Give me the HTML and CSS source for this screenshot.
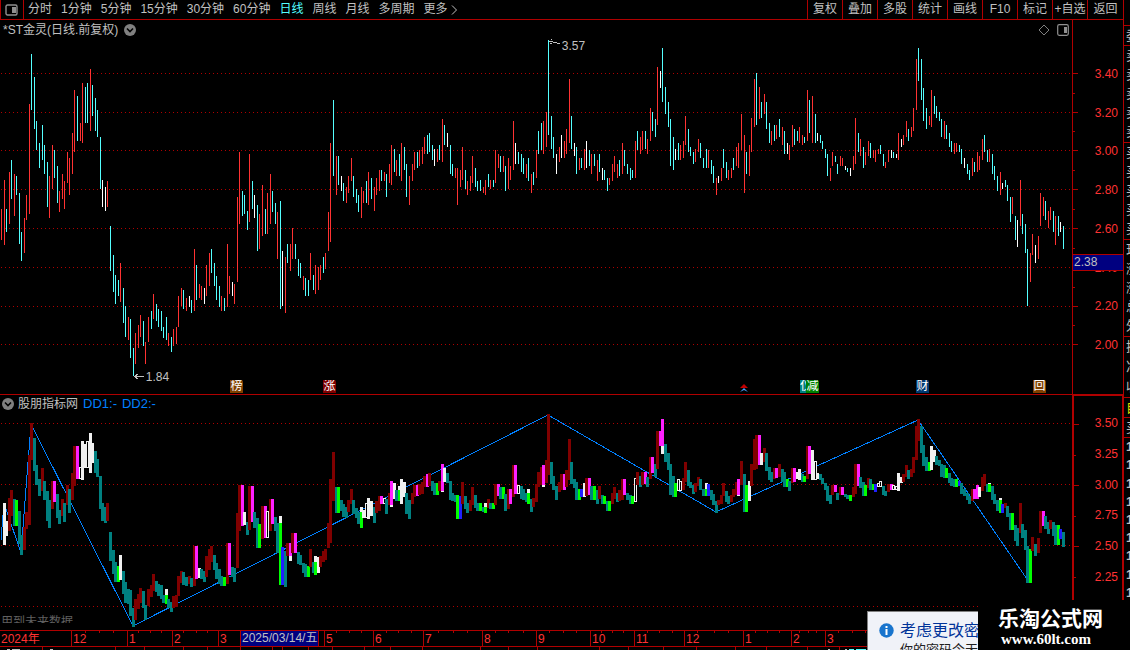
FILE: index.html
```html
<!DOCTYPE html>
<html lang="zh-CN">
<head>
<meta charset="utf-8">
<title>*ST金灵 日线</title>
<link rel="stylesheet" href="styles.css">
</head>
<body>
<div class="app">
  <main class="desk">
    <nav class="toolbar">
      <button class="layout-btn" aria-label="布局"><svg width="14" height="13" viewBox="0 0 14 13"><rect x="1" y="1" width="11" height="10" rx="1.5" fill="none" stroke="#909090" stroke-width="1.4"/><rect x="7" y="3" width="4" height="6" fill="#909090"/></svg></button>
      <div class="periods">
        <button>分时</button><button>1分钟</button><button>5分钟</button><button>15分钟</button><button>30分钟</button><button>60分钟</button><button class="active">日线</button><button>周线</button><button>月线</button><button>多周期</button><button class="more">更多<svg width="7" height="10" viewBox="0 0 7 10"><path d="M1 0.5L5.5 5L1 9.5" fill="none" stroke="#c0c0c0"/></svg></button>
      </div>
      <div class="tools">
        <button>复权</button><button>叠加</button><button>多股</button><button>统计</button><button>画线</button><button>F10</button><button>标记</button><button>+自选</button><button>返回</button>
      </div>
    </nav>

    <section class="pane price">
      <div class="plot">
        <svg class="canvas" id="price" viewBox="0 20 1072 374" preserveAspectRatio="none"></svg>
        <header class="pane-head">
          <h1>*ST金灵(日线.前复权)</h1>
          <button class="fold" aria-label="展开"><svg width="12" height="12" viewBox="0 0 12 12"><circle cx="6" cy="6" r="6" fill="#808080"/><path d="M3 4.5L6 7.5L9 4.5" fill="none" stroke="#000" stroke-width="1.6"/></svg></button>
          <span class="head-icons">
            <svg width="12" height="12" viewBox="0 0 12 12"><path d="M6 1L11 6L6 11L1 6Z" fill="none" stroke="#808080"/></svg>
            <svg width="12" height="12" viewBox="0 0 12 12"><rect x="0.7" y="0.7" width="10.6" height="10.6" rx="1.5" fill="none" stroke="#909090" stroke-width="1.2"/><rect x="7" y="3" width="3" height="6" fill="#909090"/></svg>
          </span>
        </header>
        <span class="pin high">3.57</span>
        <span class="pin low">1.84</span>
        <span class="badge brown b1">榜</span>
        <span class="badge maroon b2">涨</span>
        <svg class="marker" width="8" height="8" viewBox="0 0 8 8"><path d="M4 0L8 4H0Z" fill="#c00000"/><path d="M0 8L4 4L8 8L4 6Z" fill="#40a0ff"/></svg>
        <span class="badge teal b3">仅</span>
        <span class="badge green b4">减</span>
        <span class="badge navy b5">财</span>
        <span class="badge brown b6">回</span>
      </div>
      <div class="scale">
        <svg class="ticks" width="7" height="374" viewBox="0 20 7 374"><path d="M0 73.5H5M0 112.5H5M0 150.5H5M0 189.5H5M0 228.5H5M0 267.5H5M0 306.5H5M0 344.5H5M0 93.5H2M0 131.5H2M0 170.5H2M0 209.5H2M0 248.5H2M0 287.5H2M0 325.5H2" stroke="#b00000"/></svg>
        <span>3.40</span><span>3.20</span><span>3.00</span><span>2.80</span><span>2.60</span><span>2.40</span><span>2.20</span><span>2.00</span>
        <b class="cursor-price">2.38</b>
      </div>
    </section>

    <section class="pane study">
      <div class="plot">
        <svg class="canvas" id="study" viewBox="0 395 1072 235" preserveAspectRatio="none"></svg>
        <header class="pane-head">
          <button class="fold" aria-label="展开"><svg width="12" height="12" viewBox="0 0 12 12"><circle cx="6" cy="6" r="6" fill="#808080"/><path d="M3 4.5L6 7.5L9 4.5" fill="none" stroke="#000" stroke-width="1.6"/></svg></button>
          <h2>股朋指标网</h2><span class="value">DD1:-</span><span class="value">DD2:-</span>
        </header>
        <p class="hint">用到未来数据</p>
      </div>
      <div class="scale framed">
        <svg class="ticks" width="7" height="235" viewBox="0 395 7 235"><path d="M0 423.5H5M0 484.5H5M0 545.5H5M0 454.5H2M0 515.5H2M0 576.5H2" stroke="#b00000"/></svg>
        <span>3.50</span><span>3.25</span><span>3.00</span><span>2.75</span><span>2.50</span><span>2.25</span>
      </div>
    </section>

    <div class="timeline">
      <svg class="minor" id="minor" viewBox="0 0 1123 3" preserveAspectRatio="none"></svg>
      <span>2024年</span><span>12</span><span>1</span><span>2</span><span>3</span><span class="picked"><b>2025/03/14/五</b></span><span>5</span><span>6</span><span>7</span><span>8</span><span>9</span><span>10</span><span>11</span><span>12</span><span>1</span><span>2</span><span>3</span>
    </div>
    <footer class="tabs"><svg class="tabmarks" viewBox="0 647 1123 3" preserveAspectRatio="none"><path d="M42.5 647v3M115.5 647v3M144.5 647v3M183.5 647v3M207.5 647v3M240.5 647v3M272.5 647v3M282.5 647v3M308.5 647v3M332.5 647v3M364.5 647v3M390.5 647v3M422.5 647v3M480.5 647v3M508.5 647v3M537.5 647v3M599.5 647v3M628.5 647v3M663.5 647v3M696.5 647v3M735.5 647v3M766.5 647v3M807.5 647v3M839.5 647v3" stroke="#b00000"/><path d="M7 649.5h3M12 649.5h8M50 649.5h3M828 649.5h2M845 649.5h2" stroke="#c0c0c0"/><path d="M849 649.5h5M856 649.5h10" stroke="#54ffff"/></svg></footer>
  </main>

  <aside class="quote">
    <div class="rows r0"></div>
    <div class="rows r1"><span>委</span></div>
    <div class="rows r5"><span>卖</span><span>卖</span><span>卖</span><span>卖</span><span>卖</span></div>
    <div class="rows r5"><span>买</span><span>买</span><span>买</span><span>买</span><span>买</span></div>
    <div class="rows r5"><span>现</span><span>涨</span><span>涨</span><span>总</span><span>外</span></div>
    <div class="rows r3"><span>换</span><span>净</span><span>收</span></div>
    <div class="rows r1 yellow"><span>自</span></div>
    <div class="rows r1"><span>买</span></div>
    <div class="rows deals"><span>1</span><span>1</span><span>1</span><span>1</span><span>1</span><span>1</span><span>1</span><span>1</span><span>1</span></div>
  </aside>

  <div class="corner">
    <div class="toast" role="status">
      <svg width="15" height="15" viewBox="0 0 15 15"><circle cx="7.500" cy="7.500" r="7.200" fill="#1874cd"/><rect x="6.500" y="6" width="2" height="6" fill="#fff"/><rect x="6.500" y="3" width="2" height="2" fill="#fff"/></svg>
      <div><strong>考虑更改密码</strong><p>你的密码今天过期</p></div>
    </div>
    <div class="brand"><strong>乐淘公式网</strong><span>www.60lt.com</span></div>
  </div>
</div>
<script src="chart.js"></script>
</body>
</html>
```
FILE: styles.css
```css
* { box-sizing: border-box; margin: 0; padding: 0; }
body {
  background: #000;
  color: #c0c0c0;
  font: 12px/16px "Liberation Sans", "Noto Sans CJK SC", sans-serif;
  overflow: hidden;
}
button { background: none; border: 0; color: inherit; font: inherit; white-space: nowrap; }
svg { display: block; }
.app { display: flex; min-height: 100vh; position: relative; overflow: hidden; }
.desk { flex: 1; min-width: 0; display: flex; flex-direction: column; }

.toolbar { display: flex; height: 20px; border-bottom: 1px solid #b00000; }
.layout-btn { width: 24px; padding: 2px 0 0 4px; border-left: 1px solid #b00000; border-right: 1px solid #b00000; }
.periods { flex: 1; display: flex; gap: 9px; padding-left: 4px; }
.periods button { line-height: 19px; }
.periods .active { color: #54ffff; }
.periods .more { display: flex; align-items: center; gap: 3px; }
.tools { display: grid; grid-template-columns: repeat(8, 35px) 36px; }
.tools button { border-left: 1px solid #b00000; line-height: 19px; text-align: center; }

.pane { display: flex; }
.price { height: 375px; border-bottom: 1px solid #b00000; }
.study { height: 235px; }
.plot { flex: 1; min-width: 0; position: relative; }
.canvas { position: absolute; inset: 0; width: 100%; height: 100%; shape-rendering: crispEdges; }
.pane-head { position: relative; display: flex; align-items: center; gap: 6px; height: 19px; padding-left: 3px; }
.pane-head h1, .pane-head h2 { font-size: 12px; font-weight: normal; }
.head-icons { margin-left: auto; display: flex; gap: 7px; padding-right: 3px; }
.study .pane-head { padding-left: 2px; gap: 4px; height: 17px; }
.value { padding-left: 1px; color: #0080ff; font-size: 13px; }
.hint { position: absolute; left: 1px; top: 220px; height: 8px; line-height: 14px; overflow: hidden; color: #606060; }

.pin { position: absolute; }
.high { left: 52.400%; top: 18px; }
.low { left: 13.600%; top: 349px; }
.badge { position: absolute; top: 360px; width: 13px; height: 13px; line-height: 13px; font-size: 12px; color: #fff; text-align: center; border-top-right-radius: 2px; overflow: hidden; }
.brown { background: #804000; }
.maroon { background: #800000; }
.teal { background: #008080; }
.green { background: #008000; }
.navy { background: #003870; }
.b1 { left: 21.460%; }
.b2 { left: 30.140%; }
.b3 { left: 74.630%; width: 6px; text-align: left; }
.b4 { left: 75.190%; }
.b5 { left: 85.450%; }
.b6 { left: 96.370%; }
.marker { position: absolute; left: 69%; top: 364px; }

.scale { width: 51px; position: relative; border-left: 1px solid #b00000; display: flex; flex-direction: column; justify-content: space-between; padding: 46px 5px 41px 0; color: #ff3232; text-align: right; }
.ticks { position: absolute; left: 0; top: 0; shape-rendering: crispEdges; }
.cursor-price { position: absolute; left: 0; right: 0; top: 234px; height: 17px; line-height: 15px; padding-left: 1px; background: #000080; border: solid #b00000; border-width: 1px 0; color: #c0c0c0; font-weight: normal; font-size: 12px; text-align: left; }
.framed { border: 2px solid #b00000; border-width: 1px 1px 0 2px; padding: 19px 4px 45px 0; }

.timeline { position: relative; display: grid; height: 17px; padding-right: 51px; border: solid #b00000; border-width: 1px 0; line-height: 16px; color: #ff3232;
  grid-template-columns: 71fr 56fr 45fr 46fr 22fr 84fr 49fr 50fr 59fr 54fr 54fr 44fr 50fr 59fr 48fr 34fr 247fr; }
.timeline span { min-width: 0; height: 15px; padding-left: 1px; border-left: 1px solid #b00000; white-space: nowrap; }
.timeline span:first-of-type { border-left: 0; }
.timeline .picked { padding: 0; }
.picked b { display: inline-block; height: 15px; line-height: 15px; padding: 0 1px; background: #000080; color: #c0c0c0; font-weight: normal; border-right: 1px solid #b00000; vertical-align: top; }
.minor { position: absolute; left: 0; top: 0; width: 100%; height: 3px; shape-rendering: crispEdges; }
.tabs { height: 3px; }
.tabmarks { width: 100%; height: 3px; shape-rendering: crispEdges; }

.quote { width: 7px; overflow: hidden; border-left: 1px solid #b00000; display: flex; flex-direction: column; }
.rows { display: flex; flex-direction: column; justify-content: space-around; padding-left: 2px; border-bottom: 1px solid #b00000; line-height: 16px; font-size: 13px; }
.r0 { height: 26px; }
.r1 { height: 20px; }
.r5 { height: 97px; }
.r3 { height: 61px; }
.yellow { color: #e0e000; }
.deals { border: 0; height: 164px; font-weight: bold; }

.corner { position: absolute; right: 0; bottom: 0; height: 50px; display: flex; align-items: flex-end; }
.toast { width: 111px; height: 39px; overflow: hidden; display: flex; gap: 6px; padding: 11px 0 0 11px; background: #f0f2f8; border: solid #808080; border-width: 1px 0 0 1px; white-space: nowrap; }
.toast svg { flex: none; }
.toast div { margin-top: -3px; }
.toast strong { display: block; font-size: 16px; line-height: 22px; font-weight: normal; color: #003399; }
.toast p { font-size: 13px; line-height: 16px; color: #202020; }
.brand { width: 152px; height: 50px; padding: 8px 0 0 20px; background: #000; color: #fff; }
.brand strong { display: block; font-size: 21px; line-height: 22px; }
.brand span { display: block; padding-left: 3px; font: bold 15px/18px "Liberation Serif", serif; }
```
FILE: chart.js
```js
// x, high, low, price colour (r up, c down, w flat), study colour
const bars = `1 209 240 r -,4 180 245 r W,6 209 232 c W,9 172 224 r R,11 160 199 c R,14 174 216 r T,16 176 195 c G,19 193 244 c T,21 232 261 c T,24 218 253 r R,26 195 220 r R,29 104 214 r R,31 54 110 c R,34 77 129 c T,36 121 150 c T,39 143 168 c T,42 125 160 c R,44 145 174 c T,47 162 207 c T,49 176 218 r T,52 145 189 r R,54 150 178 c M,57 166 203 c T,59 191 212 r T,62 174 199 r R,64 181 209 r T,67 152 183 r R,69 158 195 r T,72 133 174 r R,74 90 152 r R,77 96 141 c M,80 123 141 r O,82 83 143 r W,85 87 123 c W,87 83 123 c O,90 69 131 r W,92 85 116 c W,95 98 131 c T,97 110 137 c T,100 137 189 c T,102 180 207 w T,105 187 211 w T,107 181 207 r R,110 226 271 c T,113 255 292 c T,115 275 304 c T,118 280 296 c G,120 263 302 r W,123 288 323 c T,125 306 337 c T,128 317 340 r T,130 319 358 c T,133 348 376 c T,135 333 364 r R,138 325 348 r R,140 315 337 r R,143 321 346 c T,145 342 364 r T,148 317 342 r R,151 311 329 c R,153 294 319 r R,156 304 321 c T,158 309 327 c T,161 311 331 c T,163 327 338 c T,166 317 340 c G,168 333 346 r T,171 337 352 c T,173 329 346 r R,176 327 344 r R,178 296 327 r R,181 288 306 r R,183 290 309 c T,186 298 311 r T,189 296 307 w R,191 300 313 c T,194 249 311 r R,196 265 300 c M,199 284 298 r W,201 286 300 r T,204 288 304 w T,206 265 296 r R,209 253 286 r R,211 249 273 c R,214 263 286 c T,216 276 300 c T,219 286 307 c T,221 296 311 r T,224 298 311 c G,227 244 307 r R,229 276 294 r M,232 282 296 w T,234 284 304 r T,237 197 282 r R,239 152 224 r R,242 191 216 c M,244 195 214 c W,247 211 230 c T,249 154 222 r R,252 181 209 c M,254 195 218 w T,257 205 251 c T,259 214 249 r G,262 185 236 r R,265 209 234 c M,267 193 234 r O,270 174 224 r R,272 191 212 c M,275 203 224 c T,277 212 259 r T,280 201 309 c G,282 251 306 w B,285 257 313 r T,287 244 263 c R,290 244 271 r M,292 228 259 r R,295 244 259 c M,298 259 276 c T,300 263 278 c T,303 276 290 r T,305 278 296 c T,308 280 296 c G,310 253 280 r R,313 275 290 c T,315 265 294 r G,318 267 290 r W,320 265 280 r R,323 257 273 c R,325 253 269 r R,328 212 251 r R,330 143 242 r R,333 100 176 c R,336 156 195 r T,338 156 185 c G,341 176 191 w T,343 183 201 c T,346 187 203 r T,348 176 193 r R,351 158 181 r R,353 176 197 c T,356 189 203 c T,358 195 212 c T,361 187 218 r G,363 191 203 r W,366 181 203 c O,368 172 205 r W,371 178 199 c W,374 187 211 r T,376 178 195 r R,379 170 191 r R,381 170 181 c M,384 172 181 r O,386 174 197 c T,389 164 183 r R,391 145 185 r M,394 149 172 c W,396 160 176 r T,399 154 176 c G,401 143 181 r W,404 147 170 c W,406 164 197 c T,409 176 205 r T,412 164 181 r R,414 152 170 r R,417 152 168 c M,419 150 166 r R,422 147 164 r R,424 137 154 r R,427 135 154 c M,429 133 152 c R,432 145 160 c T,434 149 166 w T,437 149 162 r G,439 145 160 c R,442 119 162 r M,444 125 145 c W,447 133 147 w T,450 145 174 c T,452 164 176 c T,455 168 178 r T,457 168 205 r G,460 170 187 r B,462 147 180 r R,465 170 189 c T,467 181 195 r T,470 176 191 r R,472 156 183 r R,475 168 187 c T,477 181 191 c T,480 180 191 c G,483 187 193 r T,485 180 195 r G,488 174 187 c R,490 180 189 r T,493 180 187 c G,495 150 183 r R,498 154 168 r M,500 156 172 c T,503 156 172 r G,505 166 191 c T,508 158 189 r R,510 166 180 r M,513 121 170 r R,515 143 164 w M,518 152 164 c O,521 154 172 c T,523 158 174 c T,526 164 178 r T,528 158 181 c G,531 174 193 r T,533 172 185 c R,536 150 178 r R,538 131 154 c R,541 123 150 c R,543 121 154 r M,546 112 147 r R,548 40 135 c R,551 116 149 c T,553 137 158 c T,556 154 174 w T,559 147 162 r R,561 135 158 w R,564 141 158 r M,566 129 154 r R,569 79 143 r R,571 116 149 c T,574 143 156 w T,576 147 174 c T,579 158 170 r G,581 158 168 c B,584 149 170 r W,586 141 168 w R,589 150 166 c M,591 154 174 r T,594 154 166 c G,597 160 181 r T,599 154 172 c R,602 168 180 w T,604 170 180 c G,607 178 191 c T,609 178 185 r G,612 164 181 r R,614 156 172 r R,617 164 178 r T,619 160 176 c R,622 143 174 r R,624 150 166 c M,627 164 174 c T,630 168 180 c T,632 170 178 c G,635 141 178 r O,637 131 150 c R,640 137 154 r T,642 131 150 r R,645 131 149 c M,647 139 154 r T,650 108 141 r R,652 112 131 c M,655 119 137 c T,657 67 125 r R,660 71 88 w M,662 48 102 c M,665 87 114 c T,668 102 127 c T,670 119 166 c T,673 137 170 c T,675 149 160 w G,678 143 160 c O,680 145 160 r O,683 141 158 r R,685 116 145 r R,688 129 152 c T,690 147 156 c T,693 152 164 c T,695 149 162 r R,698 139 152 r R,700 143 158 c T,703 158 168 c T,706 149 168 c G,708 150 168 r B,711 160 174 c T,713 166 183 c T,716 178 195 r T,718 176 183 w R,721 168 181 r R,723 149 168 c R,726 162 178 c T,728 170 180 r T,731 168 178 r R,733 158 170 c R,736 147 166 r R,738 143 168 r M,741 114 150 r R,744 135 193 r T,746 152 174 c G,749 145 176 r W,751 118 152 r R,754 79 127 r R,756 73 125 c R,759 87 119 r M,761 102 118 c W,764 94 114 r R,766 102 129 c T,769 123 143 c T,771 131 145 r T,774 125 141 c R,776 125 139 r M,779 119 137 c R,782 127 145 r T,784 131 154 c T,787 143 154 w G,789 145 160 r T,792 125 147 r R,794 129 145 c M,797 131 141 c W,799 127 143 r W,802 135 145 r T,804 137 143 c G,807 90 141 r R,809 100 133 c M,812 96 143 r W,815 114 143 c O,817 133 141 w W,820 135 143 c T,822 141 149 c T,825 149 158 c T,827 154 176 c T,830 168 181 r T,832 152 166 r R,835 156 162 c M,837 164 174 c T,840 156 166 r R,842 158 166 r M,845 166 170 w T,847 168 172 c T,850 168 176 w G,853 156 170 r R,855 118 164 r R,858 133 152 c M,860 139 156 r T,863 147 168 c T,865 152 165 r G,868 141 156 r R,870 143 158 c T,873 150 158 r G,875 150 162 r B,878 149 154 r O,880 145 154 c O,883 154 166 c T,885 162 168 r T,888 150 162 r R,891 150 158 w M,893 152 158 c O,896 154 158 w O,898 133 160 r W,901 139 147 w W,903 135 145 r R,906 121 137 r R,908 129 141 c T,911 127 137 r R,913 108 131 r R,916 59 110 r R,918 48 81 c R,921 59 100 c T,923 88 121 c T,926 108 129 c T,929 116 125 r G,931 90 127 r W,934 96 114 c W,936 106 118 c T,939 112 121 c T,941 119 137 c T,944 121 139 r T,946 125 139 c G,949 133 147 c T,951 141 152 c T,954 143 154 r T,956 143 152 r G,959 145 152 c B,961 149 164 c T,964 158 168 w T,967 164 174 c T,969 170 180 c T,972 158 176 r R,974 162 172 c M,977 152 172 r M,979 156 170 r W,982 139 160 r R,984 135 152 c R,987 150 162 c T,989 149 162 r G,992 154 174 c T,994 166 180 c T,997 176 191 c T,1000 172 195 r G,1002 183 189 w B,1005 180 187 c R,1007 185 201 c T,1010 197 222 c T,1012 197 214 r G,1015 216 240 c T,1017 220 247 w T,1020 180 226 r R,1022 214 234 c T,1025 224 253 c T,1027 249 306 c T,1030 253 282 r G,1032 234 255 r R,1035 245 263 w T,1038 236 259 r R,1040 193 226 r R,1043 197 216 r M,1045 201 220 c T,1048 211 228 r T,1050 207 220 r R,1053 211 232 c T,1055 216 245 r T,1058 216 236 c G,1060 222 232 w B,1063 226 249 c T`
  .split(",").map(row => row.split(" "));

const priceInk = { r: "#ff3232", c: "#54ffff", w: "#ffffff" };
const studyInk = { R: "#800000", T: "#008080", M: "#ff20ff", G: "#00ff00", B: "#2020ff", W: "#f0f0f0" };
const rect = (x, top, bottom, width, fill) =>
  `<rect x="${x}" y="${top}" width="${width}" height="${Math.max(1, bottom - top)}" fill="${fill}"/>`;
const dots = ys => ys.map(y => `<path d="M1 ${y}.5H1072" stroke="#b00000" stroke-dasharray="1 3"/>`).join("");

let price = dots([73, 112, 150, 189, 228, 267, 306, 344]);
let study = dots([423, 484, 545, 606]);
study += `<path d="M1 540L4 503L21 553L31 424L133 626L548 415L716 512L918 420L1029 582" fill="none" stroke="#0080ff"/>`;

// The study pane plots the same highs and lows on its own scale.
const toStudy = y => Math.round(389.2 + 0.63 * y);
let prev = null;
for (const [xs, hs, ls, ink, mark] of bars) {
  const x = +xs;
  price += rect(x, +hs, +ls, 1, priceInk[ink]);
  const top = toStudy(+hs), bottom = toStudy(+ls) + 1;
  if (mark === "O") {
    study += rect(x - 1, top, bottom, 3, "#f0f0f0") + rect(x, top + 1, bottom - 1, 1, "#000");
  } else if (mark === "M" && prev) {
    study += rect(x - 1, top, bottom, 3, "#f0f0f0");
    study += rect(x - 1, Math.min(top, prev[0]), Math.min(bottom, prev[1]), 3, studyInk.M);
  } else if ((mark === "G" || mark === "B") && prev) {
    study += rect(x - 1, top, bottom, 3, "#f0f0f0");
    study += rect(x - 1, Math.max(top, prev[0]), Math.max(bottom, prev[1]), 3, studyInk[mark]);
  } else if (studyInk[mark]) {
    study += rect(x - 1, top, bottom, 3, studyInk[mark]);
  }
  prev = [top, bottom];
}

price += `<path d="M549 41.5h4m0 1h4m0 1h3M551 39.5h1M550 43.5h2M134 376.5h10M135 375.5h2M136 374.5h2M135 377.5h2M136 378.5h2" stroke="#c0c0c0"/>`;
document.getElementById("price").innerHTML = price;
document.getElementById("study").innerHTML = study;

const minor = [85, 99, 113, 138, 150, 161, 183, 196, 207, 336, 349, 361, 386, 398, 411, 438, 453, 467, 495, 508, 523, 549, 563, 576, 601, 612, 623, 647, 659, 672, 697, 714, 728, 755, 767, 779, 799, 808, 816, 838, 852, 865];
document.getElementById("minor").innerHTML = minor.map(x => rect(x, 0, 2, 1, "#b00000")).join("");
```
